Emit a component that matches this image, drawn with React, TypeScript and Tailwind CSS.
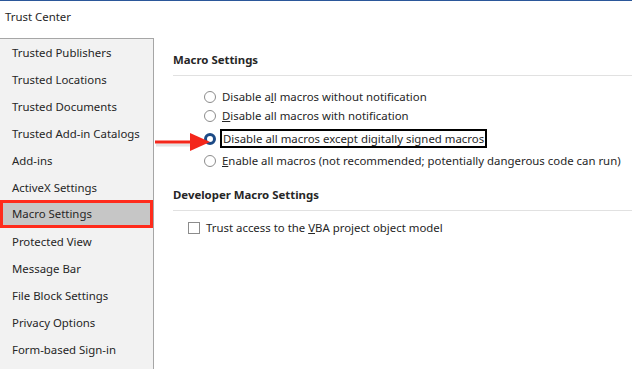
import React from 'react'

const navItems = [
    'Trusted Publishers',
    'Trusted Locations',
    'Trusted Documents',
    'Trusted Add-in Catalogs',
    'Add-ins',
    'ActiveX Settings',
    'Macro Settings',
    'Protected View',
    'Message Bar',
    'File Block Settings',
    'Privacy Options',
    'Form-based Sign-in',
]

const Radio: React.FC<{ checked?: boolean }> = ({ checked }) =>
    checked ? (
        <span className="w-[12px] h-[12px] rounded-full border-[3px] border-[#1c4a86] bg-white shrink-0" />
    ) : (
        <span className="w-[12px] h-[12px] rounded-full border border-[#8c8c8c] bg-white shrink-0" />
    )

const App: React.FC = () => {
    return (
        <div
            className="relative w-[632px] h-[369px] overflow-hidden bg-white border-t border-[#2b579a] text-[11.4px] text-[#262626] whitespace-nowrap"
            style={{ fontFamily: '"Noto Sans", "Open Sans", sans-serif' }}
        >
            <div className="h-[37px] pl-[5px] pt-[6px] text-[11.4px] leading-[20px]">Trust Center</div>

            <div className="flex">
                {/* left nav */}
                <div className="w-[154px] h-[331px] bg-[#f2f2f2] border-t border-r border-[#a6a6a6] shrink-0">
                    {navItems.map((item) =>
                        item === 'Macro Settings' ? (
                            <div
                                key={item}
                                className="h-[28px] -mt-[1px] pl-[9px] flex items-center bg-[#c6c6c6] border-[3px] border-[#ff2b1c] w-[153px]"
                            >
                                {item}
                            </div>
                        ) : (
                            <div key={item} className="h-[27px] pl-[12px] flex items-center">
                                {item}
                            </div>
                        )
                    )}
                </div>

                {/* right panel */}
                <div className="flex-1 pl-[19px] pt-[13px]">
                    <div className="font-bold text-[11.4px] leading-[18px]">Macro Settings</div>
                    <div className="mt-[6px] h-px bg-[#e1e1e1]" />

                    <div className="pl-[31px] mt-[11px] flex flex-col">
                        <div className="h-[19px] flex items-center gap-[6px]">
                            <Radio />
                            <span>
                                Disable a<span className="underline">l</span>l macros without notification
                            </span>
                        </div>
                        <div className="h-[20px] flex items-center gap-[6px]">
                            <Radio />
                            <span>
                                <span className="underline">D</span>isable all macros with notification
                            </span>
                        </div>
                        <div className="h-[25px] flex items-center gap-[4px]">
                            <Radio checked />
                            <span className="border-2 border-black px-[1px] h-[19px] flex items-center">
                                Disable all macros except digitally signed macros
                            </span>
                        </div>
                        <div className="h-[19px] flex items-center gap-[6px]">
                            <Radio />
                            <span>
                                <span className="underline">E</span>nable all macros (not recommended; potentially dangerous code can run)
                            </span>
                        </div>
                    </div>

                    <div className="mt-[16px] font-bold text-[11.4px] leading-[18px]">Developer Macro Settings</div>
                    <div className="mt-[6px] h-px bg-[#e1e1e1]" />
                    <div className="pl-[15px] mt-[10px] h-[14px] flex items-center gap-[6px]">
                        <span className="w-[12px] h-[12px] border border-[#8c8c8c] bg-white shrink-0" />
                        <span>
                            Trust access to the <span className="underline">V</span>BA project object model
                        </span>
                    </div>
                </div>
            </div>

            {/* annotation arrow */}
            <svg className="absolute left-[154px] top-[130px]" width="62" height="24" viewBox="0 0 62 24">
                <line x1="1" y1="12" x2="40" y2="12" stroke="#b0b0b0" strokeWidth="3" opacity="0.35" transform="translate(1,2)" />
                <line x1="1" y1="11" x2="40" y2="11" stroke="#f4271b" strokeWidth="3" />
                <polygon points="36,2 56,11 36,20" fill="#f4271b" />
            </svg>
        </div>
    )
}

export default App
